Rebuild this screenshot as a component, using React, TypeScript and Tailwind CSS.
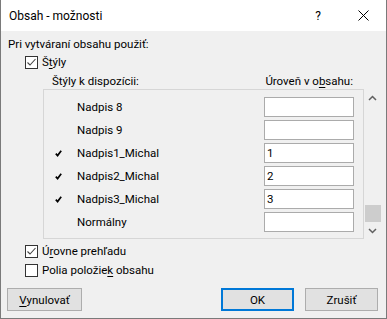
import React from "react";

function Box({ checked }: { checked?: boolean }) {
  return (
    <span className="w-[13px] h-[13px] border border-[#333333] bg-white flex items-center justify-center shrink-0">
      {checked && (
        <svg width="11" height="11" viewBox="0 0 11 11">
          <path d="M1.5 5.5 L4 8 L9.5 2" stroke="#444" fill="none" strokeWidth="1.1" />
        </svg>
      )}
    </span>
  );
}

function Tick() {
  return (
    <svg width="7" height="7" viewBox="0 0 7 7">
      <path d="M0.8 3.6 L2.6 5.6 L6.2 0.8" stroke="#000" fill="none" strokeWidth="1.7" />
    </svg>
  );
}

const rows = [
  { name: "Nadpis 8", val: "", tick: false },
  { name: "Nadpis 9", val: "", tick: false },
  { name: "Nadpis1_Michal", val: "1", tick: true },
  { name: "Nadpis2_Michal", val: "2", tick: true },
  { name: "Nadpis3_Michal", val: "3", tick: true },
  { name: "Normálny", val: "", tick: false },
];

export default function App() {
  return (
    <div className="w-[387px] h-[319px] flex flex-col border-x border-b border-[#7a7a7a] bg-[#f0f0f0] text-[11.5px] leading-[16px] text-black font-['Segoe_UI',Roboto,sans-serif] overflow-hidden">
      <div className="h-[31px] bg-white flex items-center shrink-0">
        <span className="pl-[8px] text-[12px]">Obsah - možnosti</span>
        <span className="ml-auto mr-[37px] text-[12px]">?</span>
        <svg width="11" height="11" viewBox="0 0 11 11" className="mr-[17px]">
          <path d="M0.5 0.5 L10.5 10.5 M10.5 0.5 L0.5 10.5" stroke="#000" strokeWidth="1" />
        </svg>
      </div>
      <div className="flex flex-col">
        <div className="h-[16px] mt-[5px] pl-[7px]">Pri vytváraní obsahu použiť:</div>
        <div className="h-[16px] mt-[2px] pl-[24px] flex items-center gap-[4px]">
          <Box checked />
          <span>
            Š<u className="underline-offset-2">t</u>ýly
          </span>
        </div>
        <div className="h-[16px] mt-[3px] flex">
          <span className="pl-[51px]">Štýly k dispozícii:</span>
          <span className="ml-auto mr-[33px]">
            Úroveň v o<u className="underline-offset-2">b</u>sahu:
          </span>
        </div>
        <div className="flex ml-[42px]">
          <div className="w-[321px] border border-[#d6d6d6] pt-[7px] pb-[3px] flex flex-col gap-[3px]">
            {rows.map((r) => (
              <div key={r.name} className="h-[20px] flex items-center">
                <span className="w-[33px] pl-[11px] flex items-center">{r.tick && <Tick />}</span>
                <span>{r.name}</span>
                <span className="ml-auto mr-[9px] w-[90px] h-[20px] border border-[#ababab] bg-white pl-[2px] flex items-center">
                  {r.val}
                </span>
              </div>
            ))}
          </div>
          <div className="w-[17px] h-[150px] flex flex-col items-center">
            <svg width="9" height="6" viewBox="0 0 9 6" className="mt-[6px]">
              <path d="M1 5 L4.5 1.5 L8 5" stroke="#606060" fill="none" strokeWidth="1.5" />
            </svg>
            <div className="mt-auto w-[16px] h-[17px] bg-[#cdcdcd]" />
            <svg width="9" height="6" viewBox="0 0 9 6" className="mt-[6px] mb-[5px]">
              <path d="M1 1 L4.5 4.5 L8 1" stroke="#606060" fill="none" strokeWidth="1.5" />
            </svg>
          </div>
        </div>
        <div className="h-[16px] mt-[4px] pl-[24px] flex items-center gap-[4px]">
          <Box checked />
          <span>
            Ú<u className="underline-offset-2">r</u>ovne prehľadu
          </span>
        </div>
        <div className="h-[16px] mt-[3px] pl-[24px] flex items-center gap-[4px]">
          <Box />
          <span>
            Polia položie<u className="underline-offset-2">k</u> obsahu
          </span>
        </div>
        <div className="flex mt-[10px] px-[6px] items-center">
          <button className="w-[75px] h-[23px] border border-[#adadad] bg-[#e1e1e1] flex items-center justify-center">
            <span>
              <u className="underline-offset-2">V</u>ynulovať
            </span>
          </button>
          <button className="ml-auto w-[73px] h-[23px] border-2 border-[#0078d7] bg-[#e1e1e1] flex items-center justify-center">
            OK
          </button>
          <button className="ml-[11px] mr-[2px] w-[73px] h-[23px] border border-[#adadad] bg-[#e1e1e1] flex items-center justify-center">
            Zrušiť
          </button>
        </div>
      </div>
    </div>
  );
}
